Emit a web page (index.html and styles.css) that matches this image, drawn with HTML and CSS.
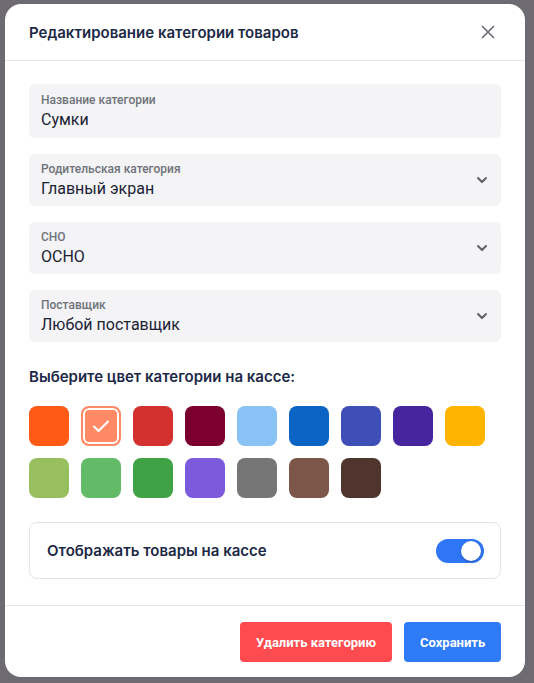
FILE: index.html
```html
<!DOCTYPE html>
<html>
<head>
  <title>Редактирование категории товаров</title>
  <link rel="stylesheet" href="styles.css">
</head>
<body>
  <div class="backdrop">
    <div class="modal">
      <div class="modal-header">
        <h2>Редактирование категории товаров</h2>
        <button class="close-btn" type="button">
          <svg width="14" height="14" viewBox="0 0 14 14"><path d="M1.5 1.5L12.5 12.5M12.5 1.5L1.5 12.5" stroke="#6b6e76" stroke-width="1.7" stroke-linecap="round"/></svg>
        </button>
      </div>

      <div class="modal-body">
        <div class="field">
          <div class="field-text">
            <span class="field-label">Название категории</span>
            <span class="field-value">Сумки</span>
          </div>
        </div>
        <div class="field">
          <div class="field-text">
            <span class="field-label">Родительская категория</span>
            <span class="field-value">Главный экран</span>
          </div>
          <svg class="chevron" width="12" height="8" viewBox="0 0 12 8"><path d="M2 2l4 4 4-4" fill="none" stroke="#5d6068" stroke-width="2" stroke-linecap="round" stroke-linejoin="round"/></svg>
        </div>
        <div class="field">
          <div class="field-text">
            <span class="field-label">СНО</span>
            <span class="field-value">ОСНО</span>
          </div>
          <svg class="chevron" width="12" height="8" viewBox="0 0 12 8"><path d="M2 2l4 4 4-4" fill="none" stroke="#5d6068" stroke-width="2" stroke-linecap="round" stroke-linejoin="round"/></svg>
        </div>
        <div class="field">
          <div class="field-text">
            <span class="field-label">Поставщик</span>
            <span class="field-value">Любой поставщик</span>
          </div>
          <svg class="chevron" width="12" height="8" viewBox="0 0 12 8"><path d="M2 2l4 4 4-4" fill="none" stroke="#5d6068" stroke-width="2" stroke-linecap="round" stroke-linejoin="round"/></svg>
        </div>

        <h3 class="section-title">Выберите цвет категории на кассе:</h3>
        <div class="swatches">
          <div class="swatch c-orange"></div>
          <div class="swatch c-peach selected">
            <svg width="18" height="14" viewBox="0 0 18 14"><path d="M2 7.5l4.5 4.5L16 2.5" fill="none" stroke="#fff" stroke-width="2" stroke-linecap="round" stroke-linejoin="round"/></svg>
          </div>
          <div class="swatch c-red"></div>
          <div class="swatch c-wine"></div>
          <div class="swatch c-sky"></div>
          <div class="swatch c-blue"></div>
          <div class="swatch c-indigo"></div>
          <div class="swatch c-purple"></div>
          <div class="swatch c-amber"></div>
          <div class="swatch c-lime"></div>
          <div class="swatch c-green"></div>
          <div class="swatch c-dgreen"></div>
          <div class="swatch c-violet"></div>
          <div class="swatch c-grey"></div>
          <div class="swatch c-brown"></div>
          <div class="swatch c-dbrown"></div>
        </div>

        <div class="toggle-card">
          <span>Отображать товары на кассе</span>
          <div class="toggle on"><div class="knob"></div></div>
        </div>
      </div>

      <div class="modal-footer">
        <button class="btn btn-danger" type="button">Удалить категорию</button>
        <button class="btn btn-primary" type="button">Сохранить</button>
      </div>
    </div>
  </div>
</body>
</html>
```

FILE: styles.css
```css
body {
  margin: 0;
  font-family: Inter, "Noto Sans", sans-serif;
  background-color: #6e6a71;
}

.backdrop {
  width: 534px;
  height: 683px;
  padding: 4px 9px 6px 5px;
  box-sizing: border-box;
}

.modal {
  height: 100%;
  background-color: #fff;
  border-radius: 16px;
  display: flex;
  flex-direction: column;
  overflow: hidden;
}

.modal-header {
  height: 56px;
  display: flex;
  align-items: center;
  justify-content: space-between;
  padding: 0 24px;
  border-bottom: 1px solid #e6e6e9;
}

.modal-header h2 {
  margin: 0;
  font-size: 15px;
  font-weight: 600;
  color: #1b2846;
}

.close-btn {
  border: none;
  background: none;
  padding: 0;
  margin-right: 6px;
  display: flex;
  cursor: pointer;
}

.modal-body {
  flex: 1;
  padding: 23px 24px 0;
  display: flex;
  flex-direction: column;
}

.field {
  height: 54px;
  box-sizing: border-box;
  background-color: #f4f4f6;
  border-radius: 6px;
  padding: 0 13px 0 12px;
  display: flex;
  align-items: center;
  justify-content: space-between;
  margin-bottom: 16px;
}

.field + .field {
  height: 52px;
}

.field-text {
  display: flex;
  flex-direction: column;
  gap: 3px;
}

.field-label {
  font-family: Roboto, sans-serif;
  font-size: 12px;
  color: #6f727a;
  font-weight: 500;
}

.field-value {
  font-family: Roboto, sans-serif;
  font-size: 16px;
  color: #1b2234;
}

.section-title {
  margin: 9px 0 20px;
  font-size: 15px;
  font-weight: 600;
  color: #1b2846;
}

.swatches {
  display: grid;
  grid-template-columns: repeat(9, 40px);
  gap: 12px;
}

.swatch {
  width: 40px;
  height: 40px;
  border-radius: 8px;
  box-sizing: border-box;
  display: flex;
  align-items: center;
  justify-content: center;
}

.swatch.selected {
  border: 2px solid #ff8a65;
  box-shadow: inset 0 0 0 2px #fff;
}

.c-orange { background-color: #ff5a16; }
.c-peach { background-color: #ff8a65; }
.c-red { background-color: #d3302f; }
.c-wine { background-color: #7b0030; }
.c-sky { background-color: #89c2f4; }
.c-blue { background-color: #0b64c4; }
.c-indigo { background-color: #3f4fb8; }
.c-purple { background-color: #46259f; }
.c-amber { background-color: #ffb400; }
.c-lime { background-color: #98bf5f; }
.c-green { background-color: #63bb6a; }
.c-dgreen { background-color: #3fa244; }
.c-violet { background-color: #7b5bdb; }
.c-grey { background-color: #767676; }
.c-brown { background-color: #7b5649; }
.c-dbrown { background-color: #50342e; }

.toggle-card {
  margin-top: 24px;
  height: 57px;
  box-sizing: border-box;
  border: 1px solid #e3e3e6;
  border-radius: 8px;
  padding: 0 16px 0 17px;
  display: flex;
  align-items: center;
  justify-content: space-between;
  font-size: 15px;
  font-weight: 600;
  color: #1b2846;
}

.toggle {
  width: 48px;
  height: 24px;
  border-radius: 12px;
  background-color: #2f76f6;
  display: flex;
  align-items: center;
  justify-content: flex-end;
  padding: 0 3px;
  box-sizing: border-box;
}

.knob {
  width: 20px;
  height: 20px;
  border-radius: 50%;
  background-color: #fff;
  box-shadow: 0 1px 3px rgba(0, 0, 0, 0.3);
}

.modal-footer {
  height: 72px;
  border-top: 1px solid #e6e6e9;
  display: flex;
  justify-content: flex-end;
  align-items: flex-start;
  gap: 12px;
  padding: 16px 24px 0;
  box-sizing: border-box;
}

.btn {
  height: 40px;
  border: none;
  border-radius: 4px;
  padding: 0 16px;
  font-family: Roboto, sans-serif;
  font-size: 13px;
  font-weight: 700;
  color: #fff;
  cursor: pointer;
}

.btn-danger {
  width: 152px;
  background-color: #fd4b4f;
}

.btn-primary {
  width: 97px;
  background-color: #2f7bf6;
}
```
